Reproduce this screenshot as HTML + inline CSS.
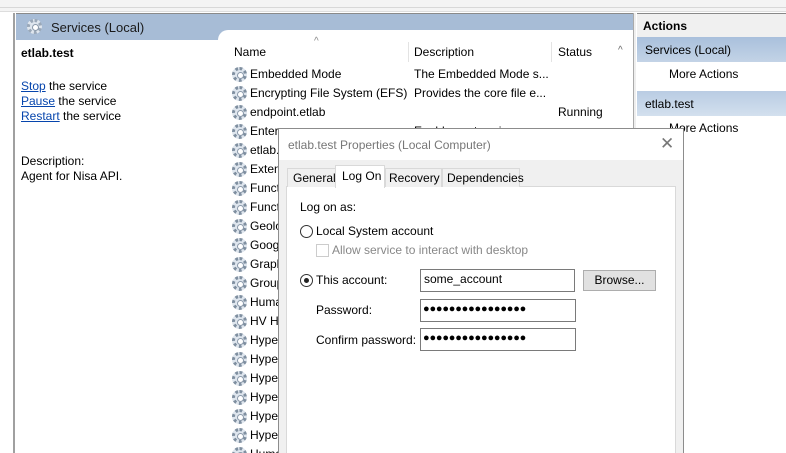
<!DOCTYPE html>
<html><head><meta charset="utf-8"><style>
*{margin:0;padding:0;box-sizing:border-box}
html,body{width:786px;height:453px;overflow:hidden}
body{background:#fff;font-family:"Liberation Sans",sans-serif;font-size:12px;color:#000;position:relative}
.a{position:absolute;white-space:nowrap}
.gear{position:absolute;width:15px;height:15px;border-radius:50%;border:3px dotted #7f8fa0;background:#dfe6ee}
.gear::after{content:"";position:absolute;left:2px;top:2px;width:5px;height:5px;border-radius:50%;background:#fff;border:1px solid #8a99aa}
a{color:#0645ad;text-decoration:underline}
.dots{font-size:11px;letter-spacing:-0.2px}
</style></head><body>
<div class="a" style="left:0;top:0;width:786px;height:12px;background:#f4f4f4;border-bottom:1px solid #ddd"></div>
<div class="a" style="left:0;top:7px;width:786px;height:1px;background:#d8d8d8"></div>
<div class="a" style="left:0;top:13px;width:15px;height:440px;background:#fff;border-right:2px solid #a0a0a0"></div>
<div class="a" style="left:16px;top:13px;width:617px;height:27px;background:#a7bcd6;border-top:1px solid #8a8a8a"></div>
<div class="gear" style="left:27px;top:19px;border-color:#9aa8b8"></div>
<div class="a" style="left:51px;top:20px;font-size:13px;color:#1a1a1a">Services (Local)</div>
<div class="a" style="left:218px;top:30px;width:415px;height:12px;background:#fff;border-radius:10px 0 0 0"></div>
<div class="a" style="left:633px;top:13px;width:3px;height:440px;background:#eee;border-left:1px solid #aaa"></div>
<div class="a" style="left:21px;top:46px;font-weight:bold">etlab.test</div>
<div class="a" style="left:21px;top:79px"><a>Stop</a> the service</div>
<div class="a" style="left:21px;top:94px"><a>Pause</a> the service</div>
<div class="a" style="left:21px;top:109px"><a>Restart</a> the service</div>
<div class="a" style="left:21px;top:154px">Description:</div>
<div class="a" style="left:21px;top:169px">Agent for Nisa API.</div>
<div class="a" style="left:314px;top:36px;font-size:10px;color:#888">^</div>
<div class="a" style="left:234px;top:45px">Name</div>
<div class="a" style="left:408px;top:42px;width:1px;height:20px;background:#e3e3e3"></div>
<div class="a" style="left:414px;top:45px">Description</div>
<div class="a" style="left:551px;top:42px;width:1px;height:20px;background:#e3e3e3"></div>
<div class="a" style="left:558px;top:45px">Status</div>
<div class="a" style="left:618px;top:45px;font-size:10px;color:#666">^</div>
<div id="rows" class="a" style="left:0;top:0;width:786px;height:453px;overflow:hidden"></div>
<div class="a" style="left:414px;top:67px">The Embedded Mode s...</div>
<div class="a" style="left:414px;top:86px">Provides the core file e...</div>
<div class="a" style="left:558px;top:105px">Running</div>
<div class="a" style="left:414px;top:124px">Enables enterprise ap...</div>
<div class="a" style="left:637px;top:13px;width:149px;height:440px;background:#fff"></div>
<div class="a" style="left:637px;top:13px;width:149px;height:24px;background:#f0f0f0;border-top:1px solid #888"></div>
<div class="a" style="left:643px;top:19px;font-weight:bold">Actions</div>
<div class="a" style="left:637px;top:37px;width:149px;height:25px;background:linear-gradient(#a9c0dc,#c3d3e6)"></div>
<div class="a" style="left:645px;top:43px">Services (Local)</div>
<div class="a" style="left:669px;top:67px">More Actions</div>
<div class="a" style="left:637px;top:91px;width:149px;height:25px;background:linear-gradient(#b9cce3,#d3e0ee)"></div>
<div class="a" style="left:645px;top:97px">etlab.test</div>
<div class="a" style="left:669px;top:121px">More Actions</div>
<!-- dialog -->
<div class="a" style="left:278px;top:128px;width:406px;height:325px;background:#f0f0f0;border:1px solid #8c8c8c;border-bottom:none"></div>
<div class="a" style="left:279px;top:129px;width:404px;height:31px;background:#fff"></div>
<div class="a" style="left:288px;top:138px;color:#777;font-size:12px">etlab.test Properties (Local Computer)</div>
<div class="a" style="left:660px;top:134px;font-size:17px;color:#777">✕</div>
<div class="a" style="left:286px;top:186px;width:390px;height:267px;background:#fff;border:1px solid #d9d9d9;border-bottom:none"></div>
<div class="a" style="left:287px;top:168px;width:49px;height:19px;border:1px solid #d9d9d9;border-bottom:none;background:#f0f0f0"></div>
<div class="a" style="left:293px;top:171px">General</div>
<div class="a" style="left:335px;top:165px;width:50px;height:23px;border:1px solid #d9d9d9;border-bottom:none;background:#fff"></div>
<div class="a" style="left:342px;top:169px">Log On</div>
<div class="a" style="left:385px;top:168px;width:57px;height:19px;border:1px solid #d9d9d9;border-bottom:none;background:#f0f0f0"></div>
<div class="a" style="left:389px;top:171px">Recovery</div>
<div class="a" style="left:442px;top:168px;width:78px;height:19px;border:1px solid #d9d9d9;border-bottom:none;background:#f0f0f0"></div>
<div class="a" style="left:447px;top:171px">Dependencies</div>
<div class="a" style="left:300px;top:200px">Log on as:</div>
<div class="a" style="left:300px;top:225px;width:13px;height:13px;border:1px solid #333;border-radius:50%;background:#fff"></div>
<div class="a" style="left:316px;top:224px">Local System account</div>
<div class="a" style="left:316px;top:244px;width:13px;height:13px;border:1px solid #ccc;background:#fff"></div>
<div class="a" style="left:332px;top:243px;color:#888">Allow service to interact with desktop</div>
<div class="a" style="left:300px;top:274px;width:13px;height:13px;border:1px solid #333;border-radius:50%;background:#fff"></div>
<div class="a" style="left:304px;top:278px;width:5px;height:5px;border-radius:50%;background:#222"></div>
<div class="a" style="left:316px;top:273px">This account:</div>
<div class="a" style="left:420px;top:269px;width:155px;height:23px;border:1px solid #7a7a7a;background:#fff"></div>
<div class="a" style="left:424px;top:272px">some_account</div>
<div class="a" style="left:583px;top:270px;width:73px;height:21px;border:1px solid #adadad;background:#e1e1e1;text-align:center;line-height:19px">Browse...</div>
<div class="a" style="left:316px;top:303px">Password:</div>
<div class="a" style="left:420px;top:299px;width:156px;height:23px;border:1px solid #7a7a7a;background:#fff"></div>
<div class="a dots" style="left:423px;top:303px">●●●●●●●●●●●●●●●●</div>
<div class="a" style="left:316px;top:333px">Confirm password:</div>
<div class="a" style="left:420px;top:328px;width:156px;height:23px;border:1px solid #7a7a7a;background:#fff"></div>
<div class="a dots" style="left:423px;top:332px">●●●●●●●●●●●●●●●●</div>
<script>
var n=["Embedded Mode","Encrypting File System (EFS)","endpoint.etlab","Enterprise App Management","etlab.test","Extensible","Function","Function","Geolocation","Google","Graphics","Group","Human","HV Host","Hyper","Hyper","Hyper","Hyper","Hyper","Hyper","Human"];
var h="";n.forEach(function(t,i){var y=66+i*19;var w=i<3?400:28;
h+='<div class="gear" style="left:232px;top:'+(y+1)+'px"></div><div class="a" style="left:250px;top:'+(y+1)+'px;width:'+(w)+'px;overflow:hidden">'+t+'</div>';});
document.getElementById("rows").innerHTML=h;
</script>
</body></html>
